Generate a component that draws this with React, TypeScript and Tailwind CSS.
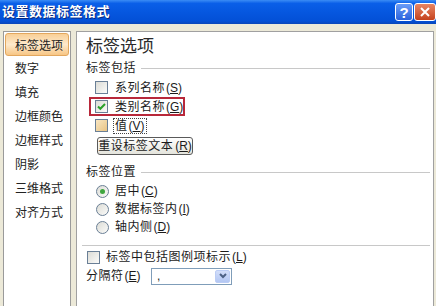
import clsx from 'clsx';

const FONT = "font-['Liberation_Sans','Noto_Sans_CJK_SC',sans-serif]";

/** Underlined accelerator key in parentheses, e.g. (S) */
function Key({ k, gap = 'ml-[1px]' }: { k: string; gap?: string }) {
  return (
    <span className={clsx('text-[12px] tracking-normal', gap)}>
      (<u className="underline underline-offset-1">{k}</u>)
    </span>
  );
}

function Check({ checked, hot }: { checked?: boolean; hot?: boolean }) {
  return (
    <span
      className={clsx(
        'flex h-[13px] w-[13px] shrink-0 items-center justify-center border border-[#6a7f96]',
        hot ? 'bg-linear-to-br from-[#f8e6c2] to-[#e9c484]' : 'bg-linear-to-br from-[#dcdcd6] to-[#fbfbf9]'
      )}
    >
      {checked && (
        <svg width="11" height="11" viewBox="0 0 11 11">
          <path d="M2 5.5 L4.3 7.8 L9 3" fill="none" stroke="#2aa12a" strokeWidth="2" />
        </svg>
      )}
    </span>
  );
}

function Radio({ checked }: { checked?: boolean }) {
  return (
    <span className="flex h-[13px] w-[13px] shrink-0 items-center justify-center rounded-full border border-[#6a7f96] bg-linear-to-br from-[#dcdcd6] to-[#fbfbf9]">
      {checked && <span className="h-[5px] w-[5px] rounded-full bg-[#3fa63f]" />}
    </span>
  );
}

function TitleBar() {
  return (
    <div className="flex h-[24px] shrink-0 items-center overflow-hidden bg-[linear-gradient(to_bottom,#3b8cf5_0%,#0a5fe8_14%,#0555dd_60%,#0350d6_88%,#0a46b8_100%)] pl-[2px]">
      <span className="text-[13px] font-bold tracking-[0.5px] text-white [text-shadow:1px_1px_0_#0a2a80]">
        设置数据标签格式
      </span>
      <span className="ml-auto flex h-[18px] w-[18px] items-center justify-center rounded-[3px] border border-white bg-linear-to-b from-[#6a9cf7] to-[#2b62dc] text-[15px] font-bold leading-none text-white">
        ?
      </span>
      <span className="ml-[1px] flex h-[18px] w-[22px] shrink-0 items-center justify-center rounded-[3px] border border-white bg-linear-to-b from-[#e88562] to-[#c4411c]">
        <svg width="10" height="10" viewBox="0 0 10 10">
          <path d="M1 1 L9 9 M9 1 L1 9" stroke="white" strokeWidth="2" />
        </svg>
      </span>
    </div>
  );
}

const sideItems = ['数字', '填充', '边框颜色', '边框样式', '阴影', '三维格式', '对齐方式'];

function SideList() {
  return (
    <div className="flex w-[68px] shrink-0 flex-col border border-b-0 border-[#9a9a9a] bg-white px-px text-[12px] text-[#222]">
      <div className="mt-px flex h-[23px] items-center whitespace-nowrap rounded-[3px] border border-[#e2a75e] bg-[linear-gradient(to_bottom,#f9cf96,#fde9cc_50%,#f7c685)] pl-[9px] pt-[2px]">
        标签选项
      </div>
      {sideItems.map((s) => (
        <div key={s} className="flex h-[24px] items-center whitespace-nowrap pl-[10px] pt-[1px]">
          {s}
        </div>
      ))}
    </div>
  );
}

function GroupLabel({ text, mt }: { text: string; mt: string }) {
  return (
    <div className={clsx('flex h-[16px] items-center', mt)}>
      <span className="leading-[16px]">{text}</span>
      <span className="ml-[5px] h-px flex-1 bg-[#c8c8c8]" />
    </div>
  );
}

function Panel() {
  return (
    <div className="flex min-w-0 flex-1 flex-col whitespace-nowrap border border-b-0 border-[#a0a0a0] bg-white pl-[9px] pr-[3px] text-[12px] tracking-[0.5px]">
      <div className="mt-[4px] h-[22px] text-[17px] leading-[22px] tracking-normal text-[#2a2a2a]">标签选项</div>
      <GroupLabel text="标签包括" mt="mt-[2px]" />

      <div className="ml-[9px] mt-[2px] flex flex-col">
        <div className="flex h-[19px] items-center gap-[7px]">
          <Check />
          <span>
            系列名称
            <Key k="S" />
          </span>
        </div>
        <div className="relative flex h-[19px] items-center gap-[7px]">
          <Check checked />
          <span>
            类别名称
            <Key k="G" />
          </span>
          <span className="absolute left-[-6px] top-0 h-[19px] w-[96px] border-2 border-[#b8283a]" />
        </div>
        <div className="flex h-[19px] items-center gap-[5px]">
          <Check hot />
          <span className="flex h-[16px] items-center border border-dotted border-[#444] px-px">
            值
            <Key k="V" />
          </span>
        </div>
        <button
          type="button"
          className="ml-[2px] mt-[2px] flex h-[18px] w-[96px] items-center justify-center whitespace-nowrap rounded-[3px] border border-[#5a5a5a] bg-linear-to-b from-white to-[#e4e4dc] text-[12px] tracking-[0.5px]"
        >
          重设标签文本
          <Key k="R" gap="ml-[2px]" />
        </button>
      </div>

      <GroupLabel text="标签位置" mt="mt-[9px]" />
      <div className="ml-[10px] mt-[2px] flex flex-col">
        {[
          ['居中', 'C', true],
          ['数据标签内', 'I', false],
          ['轴内侧', 'D', false],
        ].map(([t, k, on]) => (
          <div key={t as string} className="flex h-[18px] items-center gap-[6px]">
            <Radio checked={on as boolean} />
            <span>
              {t as string}
              <Key k={k as string} />
            </span>
          </div>
        ))}
      </div>

      <div className="-ml-[4px] mt-[9px] h-px bg-[#c8c8c8]" />

      <div className="ml-px mt-[2px] flex h-[18px] items-center gap-[6px]">
        <Check />
        <span>
          标签中包括图例项标示
          <Key k="L" />
        </span>
      </div>

      <div className="mt-px flex h-[18px] items-center">
        <span className="w-[65px] shrink-0">
          分隔符
          <Key k="E" />
        </span>
        <div className="flex h-[17px] w-[81px] items-center border border-[#7f9db9] bg-white">
          <span className="flex-1 pl-[5px] leading-none">,</span>
          <span className="m-px flex h-[13px] w-[15px] items-center justify-center rounded-[2px] border border-[#bccdf5] bg-linear-to-b from-[#d3def9] to-[#b3c7f3]">
            <svg width="8" height="6" viewBox="0 0 8 6">
              <path d="M1 1 L4 4 L7 1" fill="none" stroke="#4d6185" strokeWidth="2" />
            </svg>
          </span>
        </div>
      </div>
    </div>
  );
}

export default function App() {
  return (
    <div className={clsx('flex h-[306px] w-[436px] flex-col overflow-hidden bg-[#ece9d8] text-[13px] text-[#1b1b1b]', FONT)}>
      <TitleBar />
      <div className="flex min-h-0 flex-1 gap-[5px] pl-[3px] pr-[2px] pt-[7px]">
        <SideList />
        <Panel />
      </div>
    </div>
  );
}
